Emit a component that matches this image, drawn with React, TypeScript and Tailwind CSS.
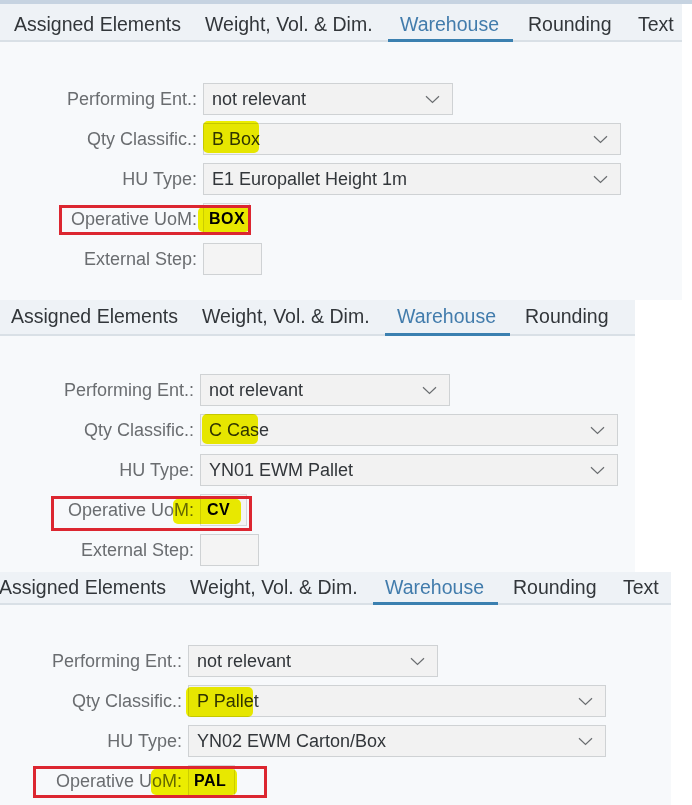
const TABS = [
  { label: 'Assigned Elements', w: 191, pl: 12 },
  { label: 'Weight, Vol. & Dim.', w: 195, pl: 12 },
  { label: 'Warehouse', w: 125, pl: 12, active: true },
  { label: 'Rounding', w: 113, pl: 15 },
  { label: 'Text', w: 60, pl: 12 },
];

type Mark = { x: number; y: number; w: number; h: number };

type PanelProps = {
  width: string;
  height: string;
  barHeight: string;
  barPad: string;
  tabShift: string;
  tabCount: number;
  formTop: string;
  labelCol: string;
  qty: string;
  hu: string;
  uom: string;
  uomPad: string;
  external: boolean;
  qtyMark: Mark;
  uomMark: Mark;
  redBox: Mark;
};

function Chevron() {
  return (
    <svg width="15" height="9" viewBox="0 0 15 9" fill="none" aria-hidden>
      <path d="M1 1.2l6.5 6.3 6.5-6.3" stroke="#6a6d70" strokeWidth="1.2" />
    </svg>
  );
}

function Select({ value, wide }: { value: string; wide?: boolean }) {
  return (
    <div
      className={
        (wide ? 'w-[418px]' : 'w-[250px]') +
        ' flex h-[32px] items-center justify-between border border-[#cfd2d4] bg-[#f2f2f2] pl-2 pr-[12px] text-[18px] text-[#32363a]'
      }
    >
      <span>{value}</span>
      <Chevron />
    </div>
  );
}

function Row({ label, col, children }: { label: string; col: string; children: React.ReactNode }) {
  return (
    <div className="flex h-[32px] items-center">
      <span className={col + ' shrink-0 pr-[6px] text-right text-[18px] text-[#6a6d70]'}>{label}</span>
      {children}
    </div>
  );
}

// annotation marks (yellow marker + red frame) sit over the form
function Overlay({ m, kind }: { m: Mark; kind: 'hl' | 'red' }) {
  const style = { left: m.x, top: m.y, width: m.w, height: m.h };
  if (kind === 'red') {
    return <div className="pointer-events-none absolute border-[3px] border-[#dc2630]" style={style} />;
  }
  return (
    <div
      className="pointer-events-none absolute rounded-[5px] bg-[#f3f300] mix-blend-multiply"
      style={style}
    />
  );
}

function Panel(p: PanelProps) {
  return (
    <section className={p.width + ' ' + p.height + ' relative shrink-0 overflow-hidden bg-[#f7f9fb]'}>
      <div className={p.barHeight + ' ' + p.barPad + ' flex items-stretch border-b-2 border-[#d9e0e6] bg-[#eef2f6]'}>
        <div className={p.tabShift + ' flex'}>
          {TABS.slice(0, p.tabCount).map((t) => (
            <div
              key={t.label}
              className="relative flex shrink-0 items-center whitespace-nowrap text-[19.5px]"
              style={{ width: t.w, paddingLeft: t.pl }}
            >
              <span className={t.active ? 'text-[#427cac]' : 'text-[#32363a]'}>{t.label}</span>
              {t.active && <span className="absolute inset-x-0 -bottom-[2px] h-[3px] bg-[#3b80b0]" />}
            </div>
          ))}
        </div>
      </div>

      <div className={p.formTop + ' flex flex-col gap-2'}>
        <Row label="Performing Ent.:" col={p.labelCol}>
          <Select value="not relevant" />
        </Row>
        <Row label="Qty Classific.:" col={p.labelCol}>
          <Select value={p.qty} wide />
        </Row>
        <Row label="HU Type:" col={p.labelCol}>
          <Select value={p.hu} wide />
        </Row>
        <Row label="Operative UoM:" col={p.labelCol}>
          <div className={p.uomPad + ' flex h-[32px] w-[47px] items-center border border-[#d5d7d9] bg-[#f4f4f4] text-[16px] font-bold tracking-[0.5px] text-black'}>
            {p.uom}
          </div>
        </Row>
        {p.external && (
          <Row label="External Step:" col={p.labelCol}>
            <div className="h-[32px] w-[59px] border border-[#cfd2d4] bg-[#f4f4f4]" />
          </Row>
        )}
      </div>

      <Overlay m={p.qtyMark} kind="hl" />
      <Overlay m={p.uomMark} kind="hl" />
      <Overlay m={p.redBox} kind="red" />
    </section>
  );
}

export default function App() {
  return (
    <div
      className="flex h-[805px] w-[692px] flex-col overflow-hidden bg-white"
      style={{ fontFamily: '"Liberation Sans", Arial, sans-serif' }}
    >
      <div className="h-[4px] w-full shrink-0 bg-[#c6d3e1]" />
      <Panel
        width="w-[682px]"
        height="h-[296px]"
        barHeight="h-[38px]"
        barPad="pt-[5px]"
        tabShift="ml-[2px]"
        tabCount={5}
        formTop="pt-[41px]"
        labelCol="w-[203px]"
        qty="B Box"
        hu="E1 Europallet Height 1m"
        uom="BOX"
        uomPad="pl-[5px]"
        external
        qtyMark={{ x: 203, y: 117, w: 56, h: 32 }}
        uomMark={{ x: 198, y: 203, w: 52, h: 25 }}
        redBox={{ x: 59, y: 201, w: 192, h: 30 }}
      />
      <Panel
        width="w-[635px]"
        height="h-[272px]"
        barHeight="h-[36px]"
        barPad="pt-0"
        tabShift="-ml-[1px]"
        tabCount={4}
        formTop="pt-[38px]"
        labelCol="w-[200px]"
        qty="C Case"
        hu="YN01 EWM Pallet"
        uom="CV"
        uomPad="pl-[6px]"
        external
        qtyMark={{ x: 202, y: 114, w: 56, h: 30 }}
        uomMark={{ x: 173, y: 199, w: 68, h: 25 }}
        redBox={{ x: 51, y: 196, w: 201, h: 35 }}
      />
      <Panel
        width="w-[671px]"
        height="h-[233px]"
        barHeight="h-[33px]"
        barPad="pt-0"
        tabShift="-ml-[13px]"
        tabCount={5}
        formTop="pt-[40px]"
        labelCol="w-[188px]"
        qty="P Pallet"
        hu="YN02 EWM Carton/Box"
        uom="PAL"
        uomPad="pl-[5px]"
        external={false}
        qtyMark={{ x: 186, y: 115, w: 67, h: 30 }}
        uomMark={{ x: 151, y: 197, w: 86, h: 26 }}
        redBox={{ x: 33, y: 194, w: 234, h: 32 }}
      />
    </div>
  );
}
